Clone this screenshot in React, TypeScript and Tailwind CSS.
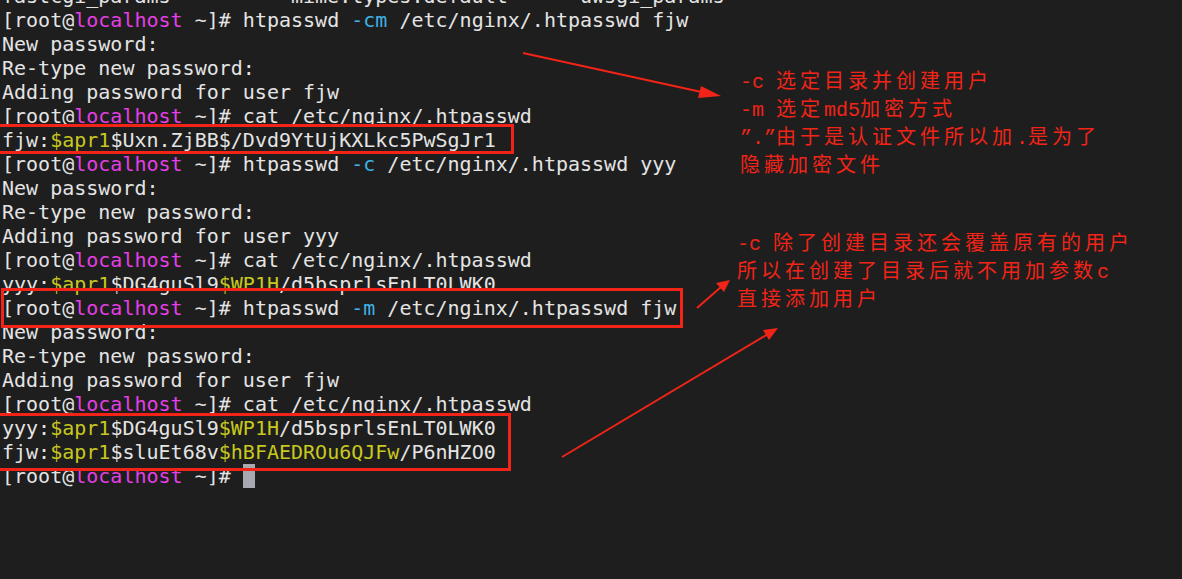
import React from "react";

type Seg = [string, string?];

const W = "#e4e4e4";
const M = "#e43ee4";
const C = "#3fb1e4";
const Y = "#c8c81e";

const P: Seg[] = [["[root@"], ["localhost", M], [" ~]#"]];

const lines: Seg[][] = [
  [["fastcgi_params          mime.types.default      uwsgi_params"]],
  [...P, [" htpasswd "], ["-cm", C], [" /etc/nginx/.htpasswd fjw"]],
  [["New password:"]],
  [["Re-type new password:"]],
  [["Adding password for user fjw"]],
  [...P, [" cat /etc/nginx/.htpasswd"]],
  [["fjw:"], ["$apr1", Y], ["$Uxn.ZjBB$/Dvd9YtUjKXLkc5PwSgJr1"]],
  [...P, [" htpasswd "], ["-c", C], [" /etc/nginx/.htpasswd yyy"]],
  [["New password:"]],
  [["Re-type new password:"]],
  [["Adding password for user yyy"]],
  [...P, [" cat /etc/nginx/.htpasswd"]],
  [["yyy:"], ["$apr1", Y], ["$DG4guSl9"], ["$WP1H", Y], ["/d5bsprlsEnLT0LWK0"]],
  [...P, [" htpasswd "], ["-m", C], [" /etc/nginx/.htpasswd fjw"]],
  [["New password:"]],
  [["Re-type new password:"]],
  [["Adding password for user fjw"]],
  [...P, [" cat /etc/nginx/.htpasswd"]],
  [["yyy:"], ["$apr1", Y], ["$DG4guSl9"], ["$WP1H", Y], ["/d5bsprlsEnLT0LWK0"]],
  [["fjw:"], ["$apr1", Y], ["$sluEt68v"], ["$hBFAEDROu6QJFw", Y], ["/P6nHZO0"]],
];

type A = { t: string; cjk?: boolean };
const Note = ({ parts }: { parts: A[] }) => (
  <div className="h-[28px] leading-[28px] whitespace-pre">
    {parts.map((p, i) =>
      p.cjk ? (
        <span key={i} className="tracking-[4px]">
          {p.t}
        </span>
      ) : (
        <span key={i}>{p.t}</span>
      )
    )}
  </div>
);

export default function App() {
  return (
    <div className="relative w-[1182px] h-[579px] overflow-hidden bg-[#1e1e1e]">
      <div
        className="mt-[-16px] pl-[2px] text-[20px] leading-[24px] whitespace-pre text-[#e4e4e4]"
        style={{ fontFamily: '"DejaVu Sans Mono", monospace' }}
      >
        {lines.map((segs, i) => (
          <div key={i} className="h-[24px]">
            {segs.map(([t, c], j) => (
              <span key={j} style={{ color: c ?? W }}>
                {t}
              </span>
            ))}
          </div>
        ))}
        <div className="h-[24px] flex items-center">
          {P.map(([t, c], j) => (
            <span key={j} style={{ color: c ?? W }}>
              {t}
            </span>
          ))}
          <span> </span>
          <span className="inline-block w-[12px] h-[24px] bg-[#a8a8b0]" />
        </div>
      </div>

      {/* red highlight boxes */}
      <div className="absolute left-[-3px] top-[124px] w-[517px] h-[30px] border-[3px] border-[#f22418]" />
      <div className="absolute left-[1px] top-[288px] w-[682px] h-[40px] border-[3px] border-[#f22418]" />
      <div className="absolute left-[-3px] top-[413px] w-[514px] h-[58px] border-[3px] border-[#f22418]" />

      {/* arrows */}
      <svg className="absolute left-0 top-0" width="1182" height="579" viewBox="0 0 1182 579">
        <g stroke="#f22418" strokeWidth="2" fill="#f22418">
          <line x1="523" y1="53" x2="706" y2="93" />
          <polygon points="721,96 701,86 698,98" stroke="none" />
          <line x1="697" y1="308" x2="721" y2="287" />
          <polygon points="730,280 716,283 724,292" stroke="none" />
          <line x1="562" y1="457" x2="768" y2="334" />
          <polygon points="778,328 763,330 769,340" stroke="none" />
        </g>
      </svg>

      {/* annotations */}
      <div
        className="absolute left-[740px] top-[69px] text-[20px] text-[#f22418]"
        style={{ fontFamily: '"Liberation Mono", "Noto Sans CJK SC", monospace' }}
      >
        <Note parts={[{ t: "-c " }, { t: "选定目录并创建用户", cjk: true }]} />
        <Note parts={[{ t: "-m " }, { t: "选定", cjk: true }, { t: "md5" }, { t: "加密方式", cjk: true }]} />
        <Note parts={[{ t: "”.”" }, { t: "由于是认证文件所以加", cjk: true }, { t: "." }, { t: "是为了", cjk: true }]} />
        <Note parts={[{ t: "隐藏加密文件", cjk: true }]} />
      </div>
      <div
        className="absolute left-[737px] top-[231px] text-[20px] text-[#f22418]"
        style={{ fontFamily: '"Liberation Mono", "Noto Sans CJK SC", monospace' }}
      >
        <Note parts={[{ t: "-c " }, { t: "除了创建目录还会覆盖原有的用户", cjk: true }]} />
        <Note parts={[{ t: "所以在创建了目录后就不用加参数", cjk: true }, { t: "c" }]} />
        <Note parts={[{ t: "直接添加用户", cjk: true }]} />
      </div>
    </div>
  );
}
